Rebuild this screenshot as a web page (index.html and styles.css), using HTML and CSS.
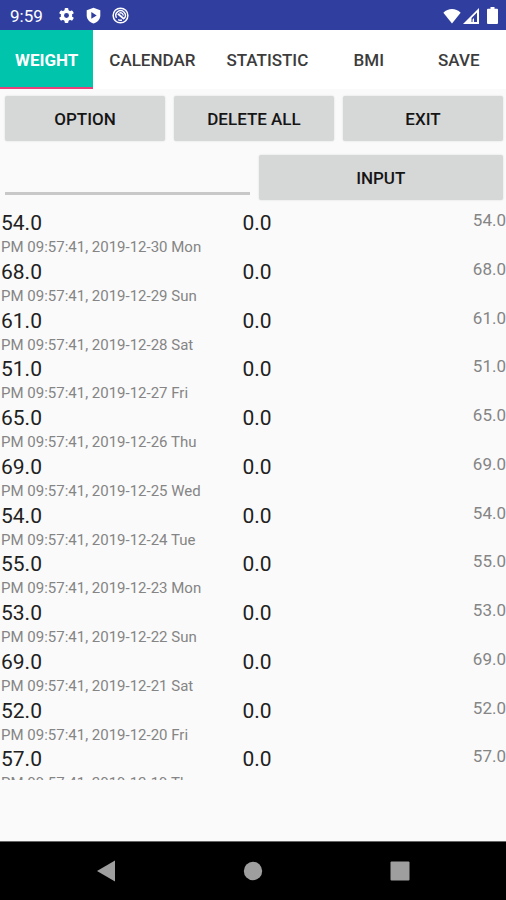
FILE: index.html
```html
<!DOCTYPE html>
<html lang="en">
<head>
<meta charset="utf-8">
<meta name="viewport" content="width=device-width, initial-scale=1">
<title>Weight</title>
<link rel="stylesheet" href="styles.css">
</head>
<body>
<div class="screen">
  <header class="status">
    <span class="clock">9:59</span>
    <div class="notices">
      <svg class="icon" viewBox="0 0 18 18" aria-hidden="true"><g fill="#fff"><circle cx="9" cy="9" r="6"/><rect x="7" y="1" width="4" height="16" rx="1"/><rect x="7" y="1" width="4" height="16" rx="1" transform="rotate(60 9 9)"/><rect x="7" y="1" width="4" height="16" rx="1" transform="rotate(120 9 9)"/></g><circle cx="9" cy="9" r="2.6" fill="#303f9f"/></svg>
      <svg class="icon" viewBox="0 0 18 18" aria-hidden="true"><path fill="#fff" d="M9 .8 16.2 3.4V9c0 4-3 7-7.2 8.6C4.800 16 1.800 13 1.800 9V3.400z"/><path fill="#303f9f" d="M6.700 5.400v7L12.400 8.900z"/></svg>
      <svg class="icon" viewBox="0 0 18 18" aria-hidden="true"><g fill="none" stroke="#fff"><circle cx="9" cy="9" r="7.800" stroke-width="1.600"/><path stroke-width="1.500" d="M4.800 11.500A5 5 0 1 1 12.800 12.300M6.500 13.400A5 5 0 0 0 10.500 13.800"/><path stroke-width="2" d="M6.200 7.200 12.800 12.600"/><path stroke-width="1.400" d="M7.800 6.400A2.800 2.800 0 0 1 11.800 9.200"/></g></svg>
    </div>
    <div class="signals">
      <svg class="wifi" viewBox="0 0 19 16" aria-hidden="true"><path fill="#fff" d="M9.500 15.800.4 4.600C5.500-.6 13.500-.6 18.600 4.600z"/></svg>
      <svg class="cell" viewBox="0 0 16 16" aria-hidden="true"><path fill="#fff" fill-rule="evenodd" d="M16 0V16H0zM14 4.500 8.500 10V14H9.500V11.500L11 10V14H14z"/></svg>
      <svg class="battery" viewBox="0 0 11 17" aria-hidden="true"><path fill="#fff" d="M3.500 0h4v1.800H10a1 1 0 0 1 1 1V16a1 1 0 0 1-1 1H1a1 1 0 0 1-1-1V2.800a1 1 0 0 1 1-1h2.500z"/></svg>
    </div>
  </header>

  <nav class="tabs">
    <a class="tab tab-active" href="#weight" aria-current="page">WEIGHT</a>
    <a class="tab" href="#calendar">CALENDAR</a>
    <a class="tab" href="#statistic">STATISTIC</a>
    <a class="tab" href="#bmi">BMI</a>
    <a class="tab" href="#save">SAVE</a>
  </nav>

  <main class="content" id="weight">
    <div class="actions">
      <button class="button" type="button">OPTION</button>
      <button class="button" type="button">DELETE ALL</button>
      <button class="button" type="button">EXIT</button>
    </div>
    <form class="entry">
      <input class="field" type="text" inputmode="decimal" aria-label="Weight">
      <button class="button" type="button">INPUT</button>
    </form>
    <div class="list">
      <ul class="records">
        <li class="record"><span class="value">54.0</span><span class="value">0.0</span><span class="total">54.0</span><time class="date">PM 09:57:41, 2019-12-30 Mon</time></li>
        <li class="record"><span class="value">68.0</span><span class="value">0.0</span><span class="total">68.0</span><time class="date">PM 09:57:41, 2019-12-29 Sun</time></li>
        <li class="record"><span class="value">61.0</span><span class="value">0.0</span><span class="total">61.0</span><time class="date">PM 09:57:41, 2019-12-28 Sat</time></li>
        <li class="record"><span class="value">51.0</span><span class="value">0.0</span><span class="total">51.0</span><time class="date">PM 09:57:41, 2019-12-27 Fri</time></li>
        <li class="record"><span class="value">65.0</span><span class="value">0.0</span><span class="total">65.0</span><time class="date">PM 09:57:41, 2019-12-26 Thu</time></li>
        <li class="record"><span class="value">69.0</span><span class="value">0.0</span><span class="total">69.0</span><time class="date">PM 09:57:41, 2019-12-25 Wed</time></li>
        <li class="record"><span class="value">54.0</span><span class="value">0.0</span><span class="total">54.0</span><time class="date">PM 09:57:41, 2019-12-24 Tue</time></li>
        <li class="record"><span class="value">55.0</span><span class="value">0.0</span><span class="total">55.0</span><time class="date">PM 09:57:41, 2019-12-23 Mon</time></li>
        <li class="record"><span class="value">53.0</span><span class="value">0.0</span><span class="total">53.0</span><time class="date">PM 09:57:41, 2019-12-22 Sun</time></li>
        <li class="record"><span class="value">69.0</span><span class="value">0.0</span><span class="total">69.0</span><time class="date">PM 09:57:41, 2019-12-21 Sat</time></li>
        <li class="record"><span class="value">52.0</span><span class="value">0.0</span><span class="total">52.0</span><time class="date">PM 09:57:41, 2019-12-20 Fri</time></li>
        <li class="record"><span class="value">57.0</span><span class="value">0.0</span><span class="total">57.0</span><time class="date">PM 09:57:41, 2019-12-19 Thu</time></li>
      </ul>
    </div>
  </main>

  <footer class="system">
    <button class="key" type="button" aria-label="Back"><svg class="key-icon" viewBox="0 0 20 22" aria-hidden="true"><path d="M1 11 19 .5v21z"/></svg></button>
    <button class="key" type="button" aria-label="Home"><svg class="key-icon" viewBox="0 0 20 22" aria-hidden="true"><circle cx="10" cy="11" r="9.200"/></svg></button>
    <button class="key" type="button" aria-label="Recent apps"><svg class="key-icon" viewBox="0 0 20 22" aria-hidden="true"><rect x=".5" y="1.500" width="19" height="19" rx="1"/></svg></button>
  </footer>
</div>
</body>
</html>
```

FILE: styles.css
```css
* {
  box-sizing: border-box;
}

body {
  margin: 0;
  background: #fafafa;
  color: #212121;
  font-family: Roboto, "Liberation Sans", sans-serif;
}

.screen {
  display: flex;
  flex-direction: column;
  height: 100vh;
}

.status {
  display: flex;
  align-items: center;
  height: 30px;
  padding: 1px 8px 0 10px;
  background: #303f9f;
  color: #fff;
}

.clock {
  font-size: 17px;
  line-height: 20px;
}

.notices {
  display: flex;
  gap: 10px;
  margin-left: 15px;
}

.icon {
  display: block;
  width: 17px;
  height: 17px;
}

.signals {
  display: flex;
  align-items: center;
  gap: 2px;
  margin-left: auto;
}

.wifi {
  width: 18px;
  height: 16px;
}

.cell {
  width: 16px;
  height: 16px;
}

.battery {
  width: 11px;
  height: 17px;
  margin-left: 6px;
}

.tabs {
  display: flex;
  gap: 1px;
  height: 59px;
  background: #fff;
}

.tab {
  display: flex;
  align-items: center;
  justify-content: center;
  min-width: 89px;
  padding: 2px 15px 0;
  border-bottom: 2px solid transparent;
  color: #3c3c3c;
  font-size: 17px;
  font-weight: 500;
  text-decoration: none;
}

.tab-active {
  border-bottom-color: #ec407a;
  background: #00c4ab;
  color: #fff;
  font-weight: 700;
}

.content {
  display: flex;
  flex: 1;
  flex-direction: column;
  min-height: 0;
  padding-bottom: 61px;
}

.actions,
.entry {
  display: grid;
  gap: 9px;
  padding: 7px 3px 7px 5px;
}

.actions {
  grid-template-columns: repeat(3, 1fr);
}

.entry {
  grid-template-columns: 1fr 1fr;
}

.button {
  height: 45px;
  padding: 0;
  border: 0;
  border-radius: 2px;
  background: #d6d7d7;
  box-shadow: 0 0 2px #d6d7d7;
  color: #151515;
  font: 500 17px Roboto, "Liberation Sans", sans-serif;
}

.field {
  width: 100%;
  height: 40px;
  padding: 0 4px;
  border: 0;
  border-bottom: 3px solid #c8c8c8;
  outline: 0;
  background: transparent;
  font: 21px Roboto, "Liberation Sans", sans-serif;
}

.list {
  flex: 1;
  min-height: 0;
  margin-top: 3px;
  overflow: hidden;
}

.records {
  display: grid;
  grid-template-rows: repeat(12, 1fr);
  height: 585px;
  margin: 0;
  padding: 0;
  list-style: none;
}

.record {
  display: grid;
  grid-template-columns: 11fr 6fr 6fr;
  grid-template-rows: 27px 21px;
  padding-left: 1px;
}

.value {
  font-size: 21px;
  line-height: 27px;
}

.total {
  color: #858585;
  font-size: 17px;
  line-height: 20px;
  text-align: right;
}

.date {
  grid-column: 1 / -1;
  color: #858585;
  font-size: 15px;
  line-height: 21px;
}

.system {
  display: grid;
  grid-template-columns: repeat(3, 1fr);
  height: 59px;
  padding: 0 33px;
  border-top: 1px solid #666;
  background: #000;
}

.key {
  display: flex;
  align-items: center;
  justify-content: center;
  padding: 0;
  border: 0;
  background: transparent;
}

.key-icon {
  width: 20px;
  height: 22px;
  fill: #9e9e9e;
}
```
